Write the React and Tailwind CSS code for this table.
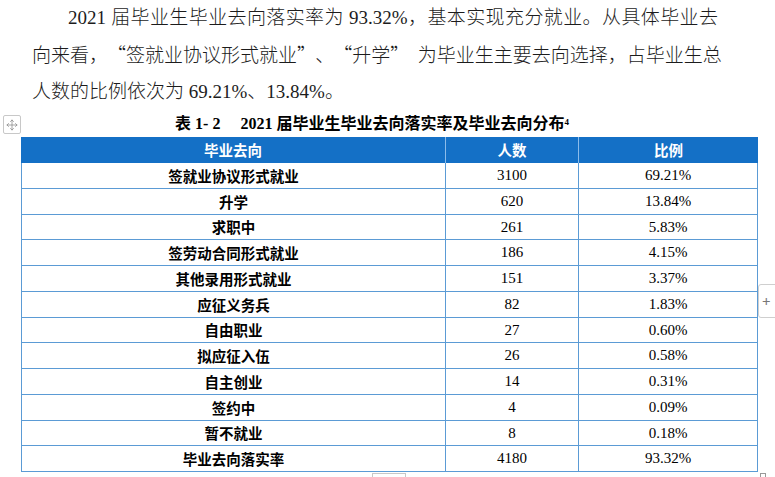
import { Move } from 'lucide-react';

const ROWS = [
  { name: '签就业协议形式就业', count: '3100', rate: '69.21%', h: 'h-[26px]' },
  { name: '升学', count: '620', rate: '13.84%', h: 'h-[26px]' },
  { name: '求职中', count: '261', rate: '5.83%', h: 'h-[25px]' },
  { name: '签劳动合同形式就业', count: '186', rate: '4.15%', h: 'h-[26px]' },
  { name: '其他录用形式就业', count: '151', rate: '3.37%', h: 'h-[26px]' },
  { name: '应征义务兵', count: '82', rate: '1.83%', h: 'h-[26px]' },
  { name: '自由职业', count: '27', rate: '0.60%', h: 'h-[25px]' },
  { name: '拟应征入伍', count: '26', rate: '0.58%', h: 'h-[26px]' },
  { name: '自主创业', count: '14', rate: '0.31%', h: 'h-[26px]' },
  { name: '签约中', count: '4', rate: '0.09%', h: 'h-[26px]' },
  { name: '暂不就业', count: '8', rate: '0.18%', h: 'h-[25px]' },
  { name: '毕业去向落实率', count: '4180', rate: '93.32%', h: 'h-[26px]' },
];

const serif = "font-['Liberation_Serif','Noto_Sans_CJK_SC',serif]";
const hei = "font-['Noto_Sans_CJK_SC',sans-serif]";

// full-width curly quotes like SimSun draws them
function Lq() {
  return <span className={`${hei} pl-[0.45em]`}>“</span>;
}
function Rq() {
  return <span className={`${hei} pr-[0.45em]`}>”</span>;
}

export default function App() {
  return (
    <div className="relative w-[775px] h-[477px] overflow-hidden bg-white">
      {/* body paragraph */}
      <div className={`${serif} ml-[32px] w-[686px] text-[19px] leading-[36px] text-[#1c1c1c] font-light`}>
        <div className="pl-[36px] text-justify [text-align-last:justify] whitespace-nowrap">
          2021 届毕业生毕业去向落实率为 93.32%，基本实现充分就业。从具体毕业去
        </div>
        <div className="text-justify [text-align-last:justify] whitespace-nowrap">
          向来看，<Lq />签就业协议形式就业<Rq />、<Lq />升学<Rq />为毕业生主要去向选择，占毕业生总
        </div>
        <div className="whitespace-nowrap">人数的比例依次为 69.21%、13.84%。</div>
      </div>

      {/* caption */}
      <div className={`${serif} h-[27px] pr-[31px] pt-[1px] flex items-center justify-center text-[16px] font-bold text-black`}>
        <span>
          表 1- 2&nbsp;&nbsp;&nbsp;&nbsp;&nbsp;2021 届毕业生毕业去向落实率及毕业去向分布
          <sup className="text-[9px]">4</sup>
        </span>
      </div>

      {/* table */}
      <div className="ml-[21px] w-[737px]">
        <div className={`${hei} grid grid-cols-[425px_133px_1fr] h-[26px] bg-[#1470c6] text-white text-[14.5px] font-bold`}>
          <div className="flex items-center justify-center border-r border-[#8cbcea]">毕业去向</div>
          <div className="flex items-center justify-center border-r border-[#8cbcea]">人数</div>
          <div className="flex items-center justify-center">比例</div>
        </div>
        <div className="border-l border-r border-[#5b9bd5]">
          {ROWS.map((r) => (
            <div
              key={r.name}
              className={`grid grid-cols-[424px_133px_1fr] ${r.h} border-b border-[#5b9bd5] text-black`}
            >
              <div className={`${hei} text-[14.5px] font-bold flex items-center justify-center border-r border-[#5b9bd5]`}>
                {r.name}
              </div>
              <div className={`${serif} text-[15px] flex items-center justify-center border-r border-[#5b9bd5]`}>
                {r.count}
              </div>
              <div className={`${serif} text-[15px] flex items-center justify-center`}>{r.rate}</div>
            </div>
          ))}
        </div>
      </div>

      {/* word table handles */}
      <div className="absolute left-[3px] top-[115px] w-[18px] h-[19px] border border-[#c8c8c8] rounded-[2px] flex items-center justify-center bg-white">
        <Move size={12} strokeWidth={1.5} className="text-[#8a8a8a]" />
      </div>
      <div className="absolute left-[758px] top-[284px] w-[20px] h-[34px] border border-[#cfcfcf] rounded-l-[3px] bg-white flex items-center pl-[3px] text-[#777] text-[15px] leading-none">
        +
      </div>
      <div className="absolute left-[372px] top-[473px] w-[34px] h-[10px] border border-[#c8c8c8] bg-white" />
      <div className="absolute left-[760px] top-[473px] w-[6px] h-[6px] border border-[#999]" />
    </div>
  );
}
